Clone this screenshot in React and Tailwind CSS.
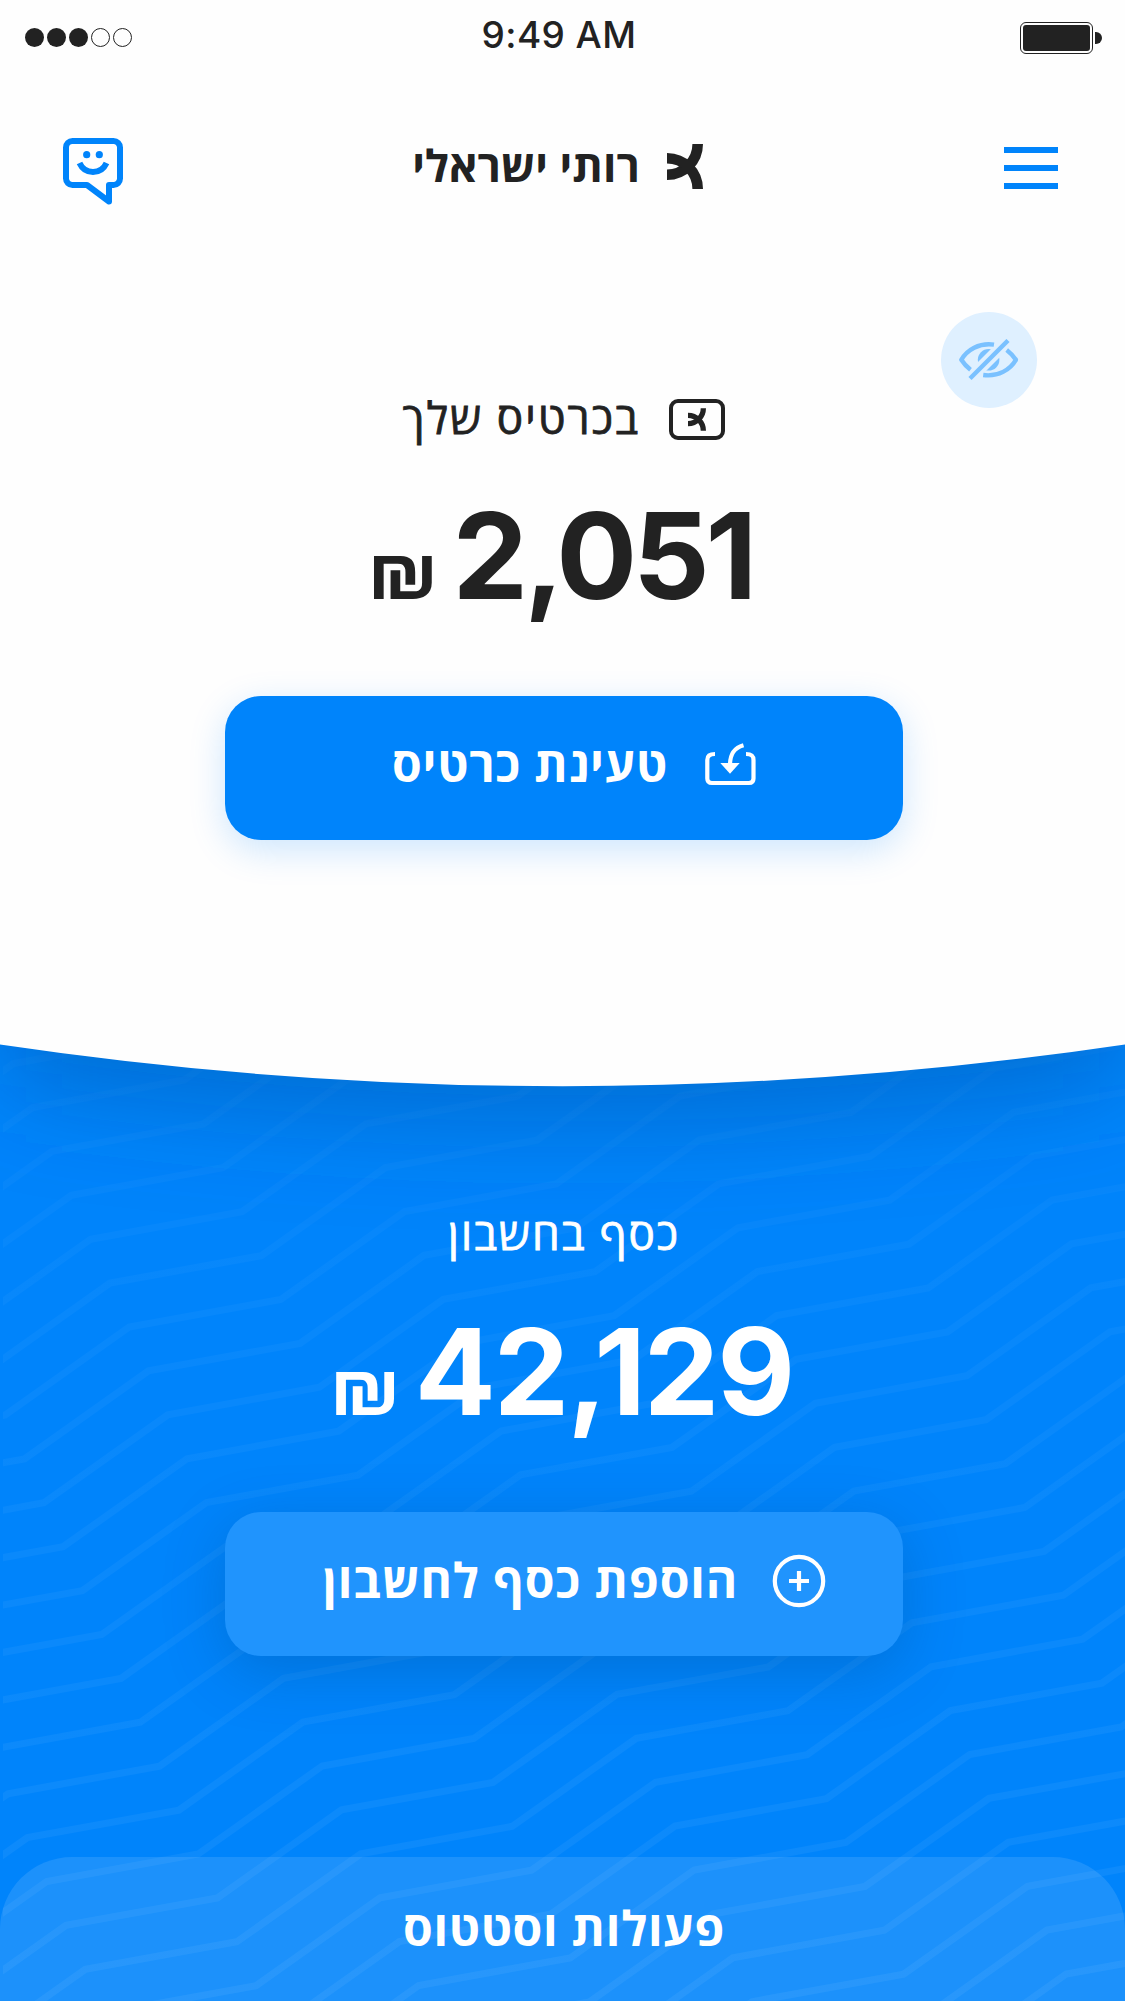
// Zigzag lines that decorate the account half of the screen
const LINE_STEP = { x: 19.3, y: 43.9 };
const PERIOD = { x: 275.5, y: -115.5 };
const FLAT = { x: 151.5, y: -27.5 };

// Build one zigzag line, shifted down by its index
function zigzag(index) {
  const points = [];
  for (let p = -4; p <= 5; p += 1) {
    const x = 443.3 + index * LINE_STEP.x + p * PERIOD.x;
    const y = 1299.3 + index * LINE_STEP.y + p * PERIOD.y;
    points.push(`${x},${y}`, `${x + FLAT.x},${y + FLAT.y}`);
  }
  return points.join(' ');
}

const lines = Array.from({ length: 44 }, (_, i) => zigzag(i - 16));

function Background() {
  return (
    <svg className="absolute inset-0" width="1125" height="2001" viewBox="0 0 1125 2001" aria-hidden="true">
      <defs>
        <filter id="heroShadow" x="-20%" y="-20%" width="140%" height="150%">
          <feGaussianBlur stdDeviation="50" />
        </filter>
        <linearGradient id="lineFade" gradientUnits="userSpaceOnUse" x1="0" y1="1050" x2="0" y2="2001">
          <stop offset="0" stopColor="#fff" stopOpacity="0.02" />
          <stop offset="0.35" stopColor="#fff" stopOpacity="0.035" />
          <stop offset="1" stopColor="#fff" stopOpacity="0.055" />
        </linearGradient>
        <clipPath id="account">
          <rect x="3" y="1000" width="1122" height="1001" />
        </clipPath>
      </defs>
      <rect width="1125" height="2001" fill="#0084fb" />
      <g clipPath="url(#account)" fill="none" stroke="url(#lineFade)" strokeWidth="7">
        {lines.map((points) => (
          <polyline key={points} points={points} />
        ))}
      </g>
      <path d="M0 600H1125V1080A3833 3833 0 0 1 0 1080Z" fill="#00428a" fillOpacity="0.34" filter="url(#heroShadow)" />
      <path d="M0 0H1125V1044.5A3833 3833 0 0 1 0 1044.5Z" fill="#fefefe" />
    </svg>
  );
}

// Brand mark: two crossing quarter arcs
function BrandMark({ className }) {
  return (
    <svg className={className} viewBox="0 0 36 45" fill="none" stroke="currentColor" strokeWidth="10.6">
      <path d="M0 30.7A30.7 30.7 0 0 0 30.7 0" />
      <path d="M0 14.3A30.7 30.7 0 0 1 30.7 45" />
    </svg>
  );
}

function ChatIcon() {
  return (
    <svg className="h-[68px] w-[62px]" viewBox="0 0 62 68" fill="none" stroke="#0084fb" strokeWidth="6">
      <path
        d="M10.5 4H51.5A6.5 6.5 0 0 1 58 10.5V41.5A6.5 6.5 0 0 1 51.5 48H47V64.5L25 48H10.5A6.5 6.5 0 0 1 4 41.5V10.5A6.5 6.5 0 0 1 10.5 4Z"
        strokeLinejoin="round"
      />
      <path d="M17.5 26C23 38 39 38 44.5 26" />
      <circle cx="24.7" cy="17.7" r="3.6" fill="#0084fb" stroke="none" />
      <circle cx="37.3" cy="17.7" r="3.6" fill="#0084fb" stroke="none" />
    </svg>
  );
}

function HiddenEyeIcon() {
  return (
    <svg className="h-[42px] w-[60px]" viewBox="0 0 60 42" fill="none" stroke="#7ac1ff" strokeWidth="4.4">
      <circle cx="29.6" cy="20.8" r="10.8" fill="#7ac1ff" stroke="none" />
      <path d="M9 41.5L51 -0.5" stroke="#dff0ff" strokeWidth="12" />
      <path d="M35 5.6C20 3.5 8 11 2.3 20.8C5 25 8 28 11.5 30.7" strokeLinejoin="round" />
      <path d="M24.2 36C39.2 38.1 51.2 30.6 56.9 20.8C54.2 16.6 51.2 13.6 47.7 10.9" strokeLinejoin="round" />
      <path d="M11 39.5L49 1.5" />
    </svg>
  );
}

function LoadIcon() {
  return (
    <svg className="h-[43px] w-[51px]" viewBox="0 0 51 43" fill="none" stroke="#fff" strokeWidth="4.2">
      <path d="M10 11C4.5 11 2.3 13 2.3 17V35.5Q2.3 40 7 40H44Q48.5 40 48.5 35.5V17C48.5 13 46.5 11 41 11" />
      <path d="M25 22C25 11 29 5 38.5 2.3" />
      <path d="M15.3 20H34.7L25 30.7Z" fill="#fff" stroke="none" />
    </svg>
  );
}

function PlusIcon() {
  return (
    <svg className="h-[54px] w-[54px]" viewBox="0 0 54 54" fill="none" stroke="#fff" strokeWidth="4.2">
      <circle cx="27" cy="27" r="24.2" />
      <path d="M27 17V37M17 27H37" />
    </svg>
  );
}

function StatusBar() {
  return (
    <div className="flex h-[75px] items-center justify-between pr-[23px] pl-[25px] font-['Inter',sans-serif]">
      <div className="flex w-[200px] gap-[3px]">
        {[true, true, true, false, false].map((on, i) => (
          <span
            key={i}
            className={on ? 'size-[19px] rounded-full bg-[#222]' : 'size-[19px] rounded-full border-[1.5px] border-[#222]'}
          />
        ))}
      </div>
      <span className="mr-[9px] mb-[7px] text-[37px] leading-none font-medium tracking-[0.4px] whitespace-nowrap">
        9:49 AM
      </span>
      <div className="flex w-[200px] items-center justify-end gap-[2.5px]">
        <div className="h-[32px] w-[73px] rounded-[6px] border-[1.5px] border-[#222] p-[2px]">
          <div className="h-full w-full rounded-[3px] bg-[#222]" />
        </div>
        <div className="h-[12px] w-[7px] rounded-r-full bg-[#222]" />
      </div>
    </div>
  );
}

function Header() {
  return (
    <header className="mt-[62px] flex h-[67px] items-start justify-between pr-[67px] pl-[62px]">
      <ChatIcon />
      <div className="mt-[7px] mr-[13px] flex items-start gap-[27px]" dir="rtl">
        <BrandMark className="h-[45px] w-[36px]" />
        <span className="-mt-px text-[44px] leading-[45px] font-bold">רותי ישראלי</span>
      </div>
      <div className="mt-[10px] flex w-[54px] flex-col gap-[12px]">
        <span className="h-[6px] bg-[#0084fb]" />
        <span className="h-[6px] bg-[#0084fb]" />
        <span className="h-[6px] bg-[#0084fb]" />
      </div>
    </header>
  );
}

function Shekel() {
  return <span className="font-['Roboto'] text-[82px] leading-none font-medium">₪</span>;
}

export default function App() {
  return (
    <div className="relative h-[2001px] w-[1125px] overflow-hidden font-['Open_Sans','Liberation_Sans',sans-serif] text-[#222]">
      <Background />
      <div className="relative flex h-full flex-col">
        <StatusBar />
        <Header />

        {/* Card balance */}
        <button className="mt-[108px] ml-[940.5px] flex size-[96px] items-center justify-center rounded-full bg-[#dff0ff]">
          <HiddenEyeIcon />
        </button>
        <section className="-mt-[9px] flex flex-col items-center pl-[3px]">
          <div className="flex h-[41px] items-start gap-[29px]" dir="rtl">
            <span className="flex h-[41px] w-[56px] items-center justify-center rounded-[9px] border-[4.5px] border-[#222]">
              <BrandMark className="h-[23px] w-[18px]" />
            </span>
            <span className="-mt-[2px] text-[44px] leading-[41px] tracking-[2.1px] [-webkit-text-stroke:0.8px_#222]">
              בכרטיס שלך
            </span>
          </div>
          <div className="mt-[56px] mr-[6px] flex h-[120px] items-baseline gap-[16px]" dir="rtl">
            <span className="font-['Inter'] text-[120px] leading-[120px] font-bold tracking-[-4.2px]">2,051</span>
            <Shekel />
          </div>
          <button
            className="mt-[80px] flex h-[144px] w-[678px] items-center justify-center gap-[37px] rounded-[36px] bg-[#0084fb] pb-[8px] pl-[20px] text-white shadow-[0_10px_36px_rgba(0,132,251,0.2)]"
            dir="rtl"
          >
            <LoadIcon />
            <span className="text-[48px] leading-none font-bold tracking-[0.8px]">טעינת כרטיס</span>
          </button>
        </section>

        {/* Account balance */}
        <section className="mt-[372px] flex flex-col items-center pl-[3px] text-white">
          <div
            className="-mt-[3px] text-[44px] leading-[48px] tracking-[1.9px] [-webkit-text-stroke:0.8px_#fff]"
            dir="rtl"
          >
            כסף בחשבון
          </div>
          <div className="mt-[55px] mr-[4px] flex h-[120px] items-baseline gap-[16px]" dir="rtl">
            <span className="font-['Inter'] text-[120px] leading-[120px] font-bold tracking-[-2.2px]">42,129</span>
            <Shekel />
          </div>
          <button
            className="mt-[80px] flex h-[144px] w-[678px] items-center justify-center gap-[34px] rounded-[36px] bg-[#2094fd] pb-[6px] pl-[21px] text-white shadow-[0_15px_60px_rgba(0,60,120,0.26)]"
            dir="rtl"
          >
            <PlusIcon />
            <span className="-mt-[2px] text-[48px] leading-none font-bold tracking-[0.9px]">הוספת כסף לחשבון</span>
          </button>
        </section>

        {/* Bottom sheet handle */}
        <footer className="mt-auto flex h-[144px] justify-center rounded-t-[72px] bg-white/11 pt-[47px] pl-[3px] text-white">
          <span className="text-[48px] leading-[48px] font-bold tracking-[0.7px]" dir="rtl">
            פעולות וסטטוס
          </span>
        </footer>
      </div>
    </div>
  );
}
